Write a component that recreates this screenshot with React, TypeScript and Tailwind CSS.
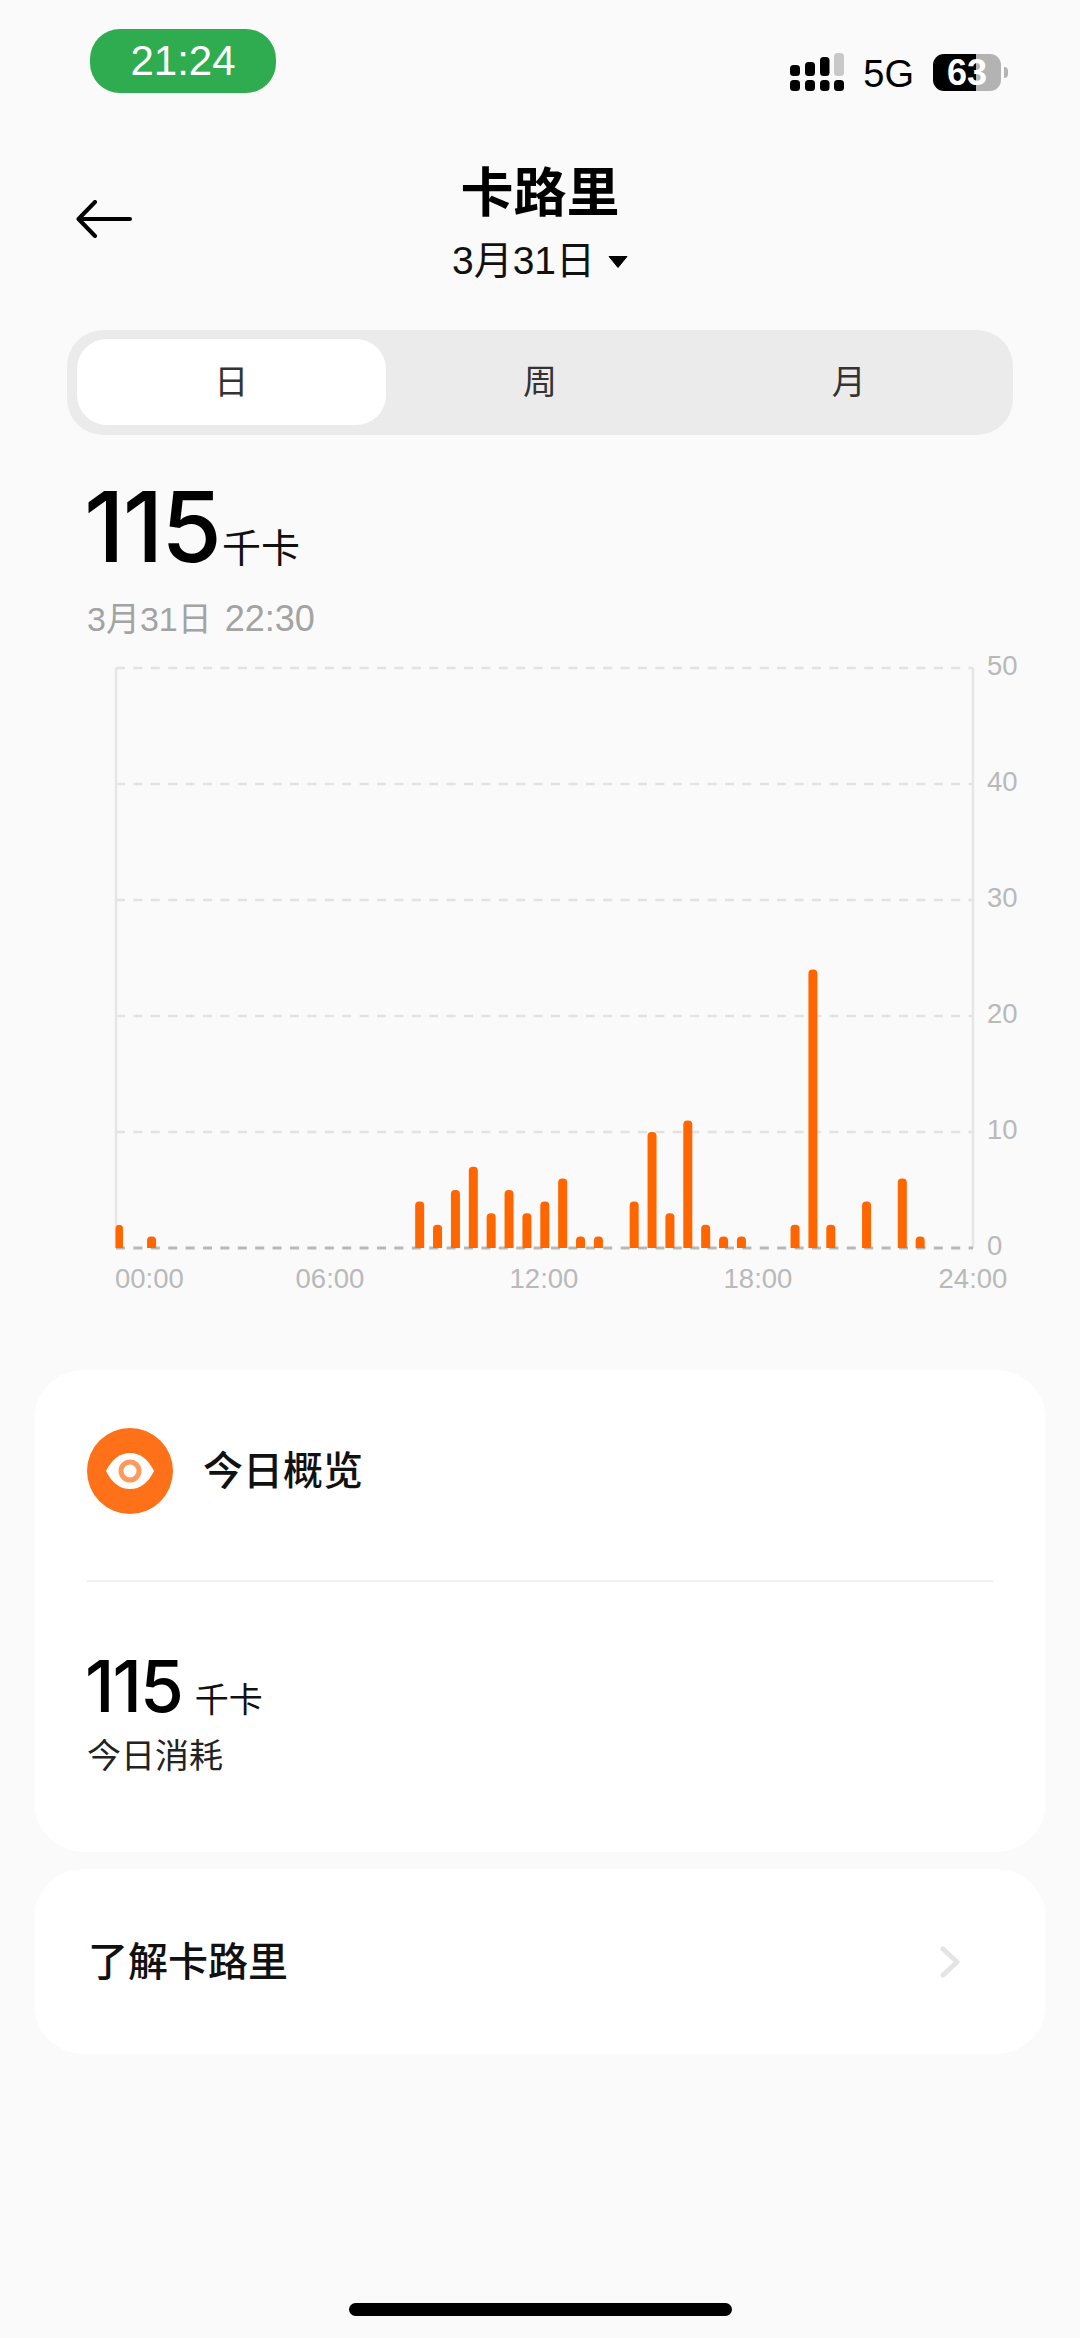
import React from 'react';

const FONT = 'font-["Liberation_Sans","Noto_Sans_CJK_SC",sans-serif]';
const DIGITS = 'font-["Inter","Noto_Sans_CJK_SC",sans-serif]';

// [half-hour slot, kcal]
const bars: [number, number][] = [
  [0, 2], [2, 1], [17, 4], [18, 2], [19, 5], [20, 7], [21, 3], [22, 5], [23, 3], [24, 4], [25, 6],
  [26, 1], [27, 1], [29, 4], [30, 10], [31, 3], [32, 11], [33, 2], [34, 1], [35, 1],
  [38, 2], [39, 24], [40, 2], [42, 4], [44, 6], [45, 1],
];

const CHART_TOP = 650;
const BASE_Y = 1247 - CHART_TOP;
const UNIT = 11.6;
const LEFT = 116;
const RIGHT = 973;

const barPath = (slot: number, value: number) => {
  const w = slot === 0 ? 7.5 : 9;
  const x = slot === 0 ? 115.5 : LEFT + slot * 17.875 - 4.7;
  const top = BASE_Y - value * UNIT;
  const r = 4;
  return `M${x} ${BASE_Y}V${top + r}a${r} ${r} 0 0 1 ${r} -${r}h${w - 2 * r}a${r} ${r} 0 0 1 ${r} ${r}V${BASE_Y}z`;
};

const Chart = () => (
  <svg width="1080" height="650" viewBox="0 0 1080 650" className="block mt-[13px]">
    {[50, 40, 30, 20, 10].map((v) => (
      <line key={v} x1={LEFT} x2={RIGHT} y1={BASE_Y - v * UNIT} y2={BASE_Y - v * UNIT} stroke="#e2e2e2" strokeWidth="2.5" strokeDasharray="9 8.4" />
    ))}
    <line x1={LEFT} x2={LEFT} y1={BASE_Y - 50 * UNIT} y2={BASE_Y} stroke="#e6e6e6" strokeWidth="2.5" />
    <line x1={RIGHT} x2={RIGHT} y1={BASE_Y - 50 * UNIT} y2={BASE_Y} stroke="#e6e6e6" strokeWidth="2.5" />
    <line x1={LEFT} x2={RIGHT} y1={BASE_Y} y2={BASE_Y} stroke="#b8b8b8" strokeWidth="3" strokeDasharray="9 8.4" />
    {bars.map(([slot, value]) => (
      <path key={slot} d={barPath(slot, value)} fill="#ff6600" />
    ))}
    <g fill="#b9b9b9" fontSize="27.5">
      {[50, 40, 30, 20, 10, 0].map((v) => (
        <text key={v} x="987" y={BASE_Y - v * UNIT + 7}>{v}</text>
      ))}
      <text x="115" y="637">00:00</text>
      <text x="330" y="637" textAnchor="middle">06:00</text>
      <text x="544" y="637" textAnchor="middle">12:00</text>
      <text x="758" y="637" textAnchor="middle">18:00</text>
      <text x="973" y="637" textAnchor="middle">24:00</text>
    </g>
  </svg>
);

const StatusBar = () => (
  <div className="flex justify-between h-[93px] pt-[29px] pl-[90px] pr-[72px]">
    <div className="w-[186px] h-[64px] rounded-[30px] bg-[#2fac4f] text-white text-[42px] leading-[64px] text-center">21:24</div>
    <div className="flex items-center gap-[19px] h-[38px] mt-[24px]">
      <svg width="54" height="38" viewBox="0 0 54 38" className="block">
        <rect x="0" y="12" width="10" height="11" rx="3.5" fill="#000" />
        <rect x="15" y="9" width="10" height="14" rx="3.5" fill="#000" />
        <rect x="30" y="4" width="9.5" height="19" rx="3.5" fill="#000" />
        <rect x="44" y="0" width="10" height="23" rx="3.5" fill="#c8c8c8" />
        <rect x="0" y="27" width="10" height="11" rx="3.5" fill="#000" />
        <rect x="15" y="27" width="10" height="11" rx="3.5" fill="#000" />
        <rect x="30" y="27" width="9.5" height="11" rx="3.5" fill="#000" />
        <rect x="44" y="27" width="10" height="11" rx="3.5" fill="#000" />
      </svg>
      <span className="text-[38px] leading-[38px] mt-[3px] text-black">5G</span>
      <div className="flex items-center gap-[3px]">
        <div className="w-[68px] h-[37px] rounded-[11px] bg-[linear-gradient(90deg,#000_0,#000_43px,#b3b3b3_43px)] text-white text-[36px] leading-[37px] font-bold text-center whitespace-nowrap">63</div>
        <div className="w-[4px] h-[11px] rounded-r-full bg-[#b3b3b3]" />
      </div>
    </div>
  </div>
);

const Header = () => (
  <div className="grid grid-cols-[1fr_auto_1fr] items-start mt-[71px] pl-[76px]">
    <svg width="56" height="38" viewBox="0 0 56 38" className="block mt-[36px]" fill="none" stroke="#000" strokeWidth="4" strokeLinecap="round" strokeLinejoin="round">
      <path d="M54 19H3M19 2L2.5 19L19 36" />
    </svg>
    <div className="flex flex-col items-center -ml-[76px]">
      <div className="text-[53px] leading-[60px] font-semibold text-black">卡路里</div>
      <div className="flex items-center gap-[13px] mt-[16px]">
        <span className="text-[39px] leading-[42px] text-[#111]">3月31日</span>
        <svg width="20" height="13" viewBox="0 0 20 13" className="block">
          <path d="M1 1.5h18L10 12.5z" fill="#000" stroke="#000" strokeLinejoin="round" />
        </svg>
      </div>
    </div>
    <div />
  </div>
);

const Tabs = () => (
  <div className="flex mx-[67px] mt-[48px] h-[105px] pt-[9px] pb-[10px] px-[10px] rounded-[36px] bg-[#ebebeb]">
    {['日', '周', '月'].map((t, i) => (
      <div key={t} className={i === 0 ? 'flex-1 rounded-[30px] bg-white flex items-center justify-center text-[34px] text-[#333]' : 'flex-1 flex items-center justify-center text-[34px] text-[#333]'}>
        {t}
      </div>
    ))}
  </div>
);

const EyeIcon = () => (
  <div className="w-[86px] h-[86px] rounded-full bg-[#ff7119] flex items-center justify-center shrink-0">
    <svg width="50" height="38" viewBox="0 0 50 38" className="block">
      <path d="M1 19C7 7 15 1 25 1s18 6 24 18c-6 12-14 18-24 18S7 31 1 19z" fill="#fff" />
      <circle cx="25" cy="19" r="9" fill="none" stroke="#ff9a5e" strokeWidth="5" />
    </svg>
  </div>
);

export default function App() {
  return (
    <div className={`${FONT} w-[1080px] h-[2338px] bg-[#fafafa] flex flex-col overflow-hidden`}>
      <StatusBar />
      <Header />
      <Tabs />

      <div className="flex items-end pl-[84px] mt-[43px] h-[98px]">
        <span className={`${DIGITS} text-[98px] leading-[98px] font-medium tracking-[-2px] text-black`}>115</span>
        <span className="text-[39px] leading-[40px] ml-[2px] mb-[7px] text-[#111]">千卡</span>
      </div>
      <div className="flex items-baseline gap-[13px] pl-[87px] mt-[24px] leading-[38px] text-[#a3a3a3]">
        <span className="text-[34px]">3月31日</span>
        <span className="text-[36px]">22:30</span>
      </div>

      <Chart />

      <div className="mx-[34px] mt-[69px] h-[482px] rounded-[50px] bg-white flex flex-col px-[53px]">
        <div className="flex items-center gap-[30px] h-[212px] border-b-2 border-[#f1f1f1] pb-[8px]">
          <EyeIcon />
          <span className="text-[40px] font-medium text-[#111]">今日概览</span>
        </div>
        <div className="flex items-baseline mt-[69px] h-[70px]">
          <span className={`${DIGITS} text-[71px] leading-[70px] font-medium tracking-[-2px] text-black -ml-[2px]`}>115</span>
          <span className="text-[34px] ml-[13px] text-[#111]">千卡</span>
        </div>
        <div className="mt-[14px] text-[34px] leading-[42px] text-[#222]">今日消耗</div>
      </div>

      <div className="mx-[34px] mt-[17px] h-[185px] rounded-[50px] bg-white flex items-center justify-between pl-[54px] pr-[86px]">
        <span className="text-[40px] font-medium text-[#111]">了解卡路里</span>
        <svg width="20" height="32" viewBox="0 0 20 32" className="block" fill="none" stroke="#e4e4e4" strokeWidth="5" strokeLinecap="round" strokeLinejoin="round">
          <path d="M3 3l14 13L3 29" />
        </svg>
      </div>

      <div className="mt-auto mb-[22px] mx-auto w-[383px] h-[13px] rounded-full bg-black" />
    </div>
  );
}
